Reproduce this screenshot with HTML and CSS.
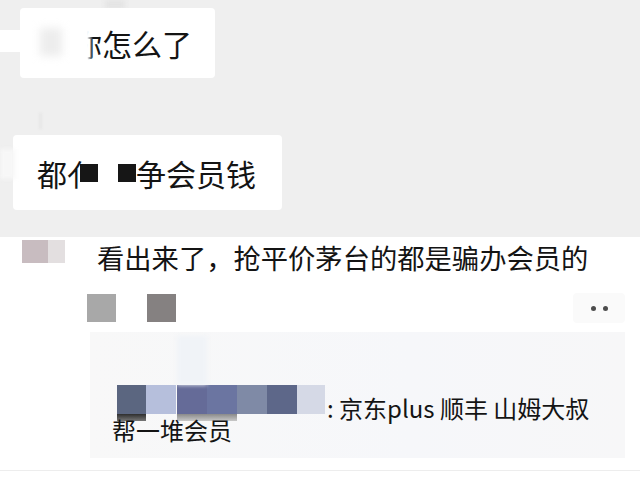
FILE: index.html
```html
<!DOCTYPE html>
<html lang="zh-CN">
<head>
<meta charset="utf-8">
<title>聊天截图</title>
<link rel="stylesheet" href="styles.css">
</head>
<body>
<div class="screen">
  <section class="chat">
    <div class="stripe"></div>
    <div class="bubble bubble-one">
      <span class="smudge"></span><span class="hidden-char">你</span>怎么了
    </div>
    <div class="mark"></div>
    <div class="bubble bubble-two">
      <span>都</span><span class="radical">亻</span><span class="sq sq-first"></span><span class="sq-gap"></span><span class="sq"></span><span>争会员钱</span>
    </div>
  </section>
  <section class="post">
    <div class="avatar"><span class="av-a"></span><span class="av-b"></span></div>
    <div class="content">
      <div class="text">看出来了，抢平价茅台的都是骗办会员的</div>
      <div class="meta">
        <span class="gsq gsq-light"></span>
        <span class="gsq gsq-dark"></span>
        <span class="more"><i></i><i></i></span>
      </div>
      <div class="quote">
        <div class="qline"><span class="censor"><b class="c1"></b><b class="c2"></b><b class="c3"></b><b class="c4"></b><b class="c5"></b><b class="c6"></b><b class="c7"></b><em class="d1"></em><em class="d2"></em><em class="d3"></em></span>: 京东plus 顺丰 山姆大叔</div>
        <div class="qline second">帮一堆会员</div>
      </div>
      <div class="sep"></div>
    </div>
  </section>
</div>
</body>
</html>
```

FILE: styles.css
```css
* { box-sizing: border-box; margin: 0; padding: 0; }
html, body { width: 640px; height: 480px; overflow: hidden; background: #ffffff; }
body {
  font-family: "Noto Sans CJK SC", "Noto Sans", sans-serif;
  color: #141414;
}
.screen { width: 640px; height: 480px; display: flex; flex-direction: column; }

.chat {
  height: 237px;
  background: #efefef;
  padding-top: 8px;
  position: relative;
}
.stripe {
  position: absolute; left: 105px; top: 0; width: 20px; height: 9px;
  background: #e4e4e4; filter: blur(2px);
}
.bubble {
  background: #ffffff;
  border-radius: 4px;
  font-size: 30px;
  display: flex;
  align-items: center;
  position: relative;
  white-space: nowrap;
}
.bubble-one {
  margin-left: 20px;
  width: 195px;
  height: 70px;
  padding-left: 52px;
}
.bubble-one::before {
  content: ""; position: absolute; left: -20px; top: 22px;
  width: 22px; height: 22px; background: #ffffff;
}
.smudge {
  position: absolute; left: 20px; top: 20px; width: 22px; height: 28px;
  background: #ededed; filter: blur(4px);
}
.hidden-char { position: relative; }
.hidden-char::after {
  content: ""; position: absolute; left: -2px; top: 0; bottom: 0; width: 23px;
  background: linear-gradient(to right, #ffffff 75%, rgba(255,255,255,0));
}
.mark {
  width: 3px; height: 16px; margin: 35px 0 0 39px;
  background: #e6e6e6; filter: blur(1px);
}
.bubble-two {
  margin-top: 6px;
  margin-left: 13px;
  width: 269px;
  height: 75px;
  padding-left: 24px;
}
.bubble-two::before {
  content: ""; position: absolute; left: -13px; top: 14px;
  width: 15px; height: 30px; background: #f7f7f7; filter: blur(2px);
}
.radical { display: inline-block; }
.sq { display: inline-block; width: 18px; height: 18px; background: #161616; position: relative; }
.sq-first { margin-left: -17px; }
.sq-gap { display: inline-block; width: 20px; }

.post { flex: 1; display: flex; padding-top: 3px; }
.avatar { margin-left: 22px; width: 43px; height: 23px; display: flex; filter: blur(0.6px); }
.av-a { width: 26px; background: #c8bcc0; }
.av-b { width: 17px; background: #e3dfe0; }
.content { margin-left: 22px; flex: 1; display: flex; flex-direction: column; }
.text {
  padding-left: 10px;
  font-size: 27.3px;
  line-height: 34px;
  height: 34px;
  white-space: nowrap;
}
.meta { margin-top: 20px; height: 28px; display: flex; align-items: center; padding-right: 15px; }
.gsq { width: 29px; height: 28px; filter: blur(0.6px); }
.gsq-light { background: #a8a8a8; }
.gsq-dark { background: #858181; margin-left: 31px; }
.more {
  margin-left: auto; width: 52px; height: 30px; border-radius: 4px;
  background: #fafafa; display: flex; align-items: center; justify-content: center; gap: 7px;
}
.more i { width: 5px; height: 5px; border-radius: 50%; background: #4d4d4d; }
.quote {
  margin-top: 10px;
  margin-right: 15px;
  margin-left: 3px;
  height: 126px;
  background: linear-gradient(to right, #f8f8f8, #f6f7fa 60%, #f7f7f8);
  padding: 53px 0 0 22px;
  font-size: 24px;
}
.qline { line-height: 30px; height: 30px; white-space: nowrap; }
.censor {
  display: inline-block; position: relative; vertical-align: 4px;
  margin-left: 5px; margin-right: 2px;
  width: 208px; height: 29px;
}
.censor b { position: absolute; top: 0; height: 29px; width: 30px; }
.censor .c1 { left: 0; background: #5b6680; }
.censor .c2 { left: 29px; background: #b6bfdc; }
.censor .c3 { left: 60px; background: #656b98; }
.censor .c4 { left: 90px; background: #6b75a1; }
.censor .c5 { left: 120px; background: #7f8aa6; }
.censor .c6 { left: 150px; background: #5d6789; }
.censor .c7 { left: 180px; width: 28px; background: #d5d9e6; }
.censor em { position: absolute; }
.censor .d1 { left: 0; top: 29px; width: 29px; height: 7px; background: linear-gradient(#2e2e2e, #777); }
.censor .d2 { left: 60px; top: 29px; width: 60px; height: 7px; background: linear-gradient(#8a8a8a, #c8c8c8); }
.censor .d3 { left: 60px; top: -49px; width: 30px; height: 49px; background: #f0f3f7; filter: blur(2px); }
.second { position: relative; }
.sep { margin-top: 12px; margin-left: -87px; height: 1px; background: #ededed; }
```
